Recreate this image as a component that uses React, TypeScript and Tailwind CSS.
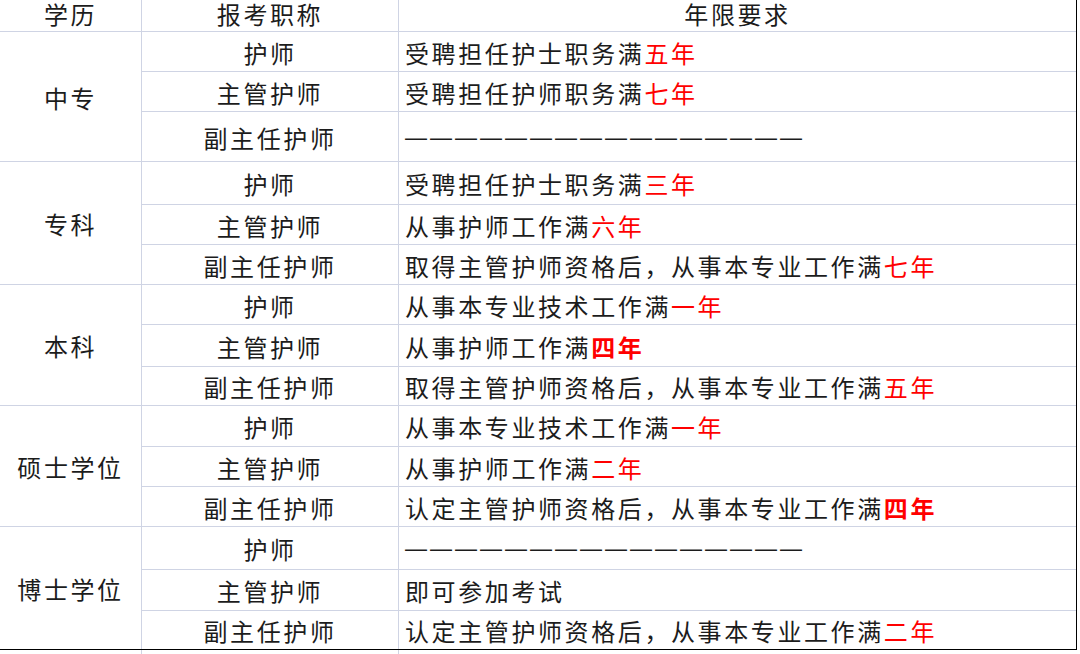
const RED = "text-[#ff0000]";

type Sub = { title: string; text: string; years?: string; bold?: boolean; dash?: boolean; h: string };
type Group = { name: string; rows: Sub[] };

const DASH = "————————————————";

const groups: Group[] = [
  {
    name: "中专",
    rows: [
      { title: "护师", text: "受聘担任护士职务满", years: "五年", h: "h-[40px]" },
      { title: "主管护师", text: "受聘担任护师职务满", years: "七年", h: "h-[40px]" },
      { title: "副主任护师", text: DASH, dash: true, h: "h-[49px]" },
    ],
  },
  {
    name: "专科",
    rows: [
      { title: "护师", text: "受聘担任护士职务满", years: "三年", h: "h-[43px]" },
      { title: "主管护师", text: "从事护师工作满", years: "六年", h: "h-[40px]" },
      { title: "副主任护师", text: "取得主管护师资格后，从事本专业工作满", years: "七年", h: "h-[39px]" },
    ],
  },
  {
    name: "本科",
    rows: [
      { title: "护师", text: "从事本专业技术工作满", years: "一年", h: "h-[40px]" },
      { title: "主管护师", text: "从事护师工作满", years: "四年", bold: true, h: "h-[42px]" },
      { title: "副主任护师", text: "取得主管护师资格后，从事本专业工作满", years: "五年", h: "h-[38px]" },
    ],
  },
  {
    name: "硕士学位",
    rows: [
      { title: "护师", text: "从事本专业技术工作满", years: "一年", h: "h-[41px]" },
      { title: "主管护师", text: "从事护师工作满", years: "二年", h: "h-[40px]" },
      { title: "副主任护师", text: "认定主管护师资格后，从事本专业工作满", years: "四年", bold: true, h: "h-[39px]" },
    ],
  },
  {
    name: "博士学位",
    rows: [
      { title: "护师", text: DASH, dash: true, h: "h-[43px]" },
      { title: "主管护师", text: "即可参加考试", h: "h-[41px]" },
      { title: "副主任护师", text: "认定主管护师资格后，从事本专业工作满", years: "二年", h: "h-[38px]" },
    ],
  },
];

export default function App() {
  return (
    <div
      className="w-[1080px] h-[654px] overflow-hidden bg-white text-[24px] leading-none tracking-[2.6px] text-[#1c1c1c]"
      style={{ fontFamily: '"Noto Sans CJK SC", sans-serif' }}
    >
      <div className="w-[1077px] border-r border-b border-black">
        {/* header */}
        <div className="flex h-[32px] border-b border-[#cfd4e4]">
          <div className="w-[142px] shrink-0 border-r border-[#cfd4e4] flex items-center justify-center pb-[3px]">
            学历
          </div>
          <div className="w-[257px] shrink-0 border-r border-[#cfd4e4] flex items-center justify-center pb-[3px]">
            报考职称
          </div>
          <div className="flex-1 flex items-center justify-center pb-[3px]">年限要求</div>
        </div>

        {groups.map((g, gi) => (
          <div
            key={g.name}
            className={`flex ${gi < groups.length - 1 ? "border-b border-[#cfd4e4]" : ""}`}
          >
            <div className="w-[142px] shrink-0 border-r border-[#cfd4e4] flex items-center justify-center pt-[2px]">
              {g.name}
            </div>
            <div className="flex-1 flex flex-col">
              {g.rows.map((r, ri) => (
                <div
                  key={r.title}
                  className={`flex ${r.h} ${ri < 2 ? "border-b border-[#cfd4e4]" : ""}`}
                >
                  <div className="w-[257px] shrink-0 border-r border-[#cfd4e4] flex items-center justify-center pt-[2px]">
                    {r.title}
                  </div>
                  <div className="flex-1 flex items-center pl-[6px] pt-[2px] whitespace-nowrap">
                    {r.dash ? (
                      <span
                        className="text-[22px] tracking-[3px]"
                        style={{ fontFamily: '"Liberation Sans", sans-serif' }}
                      >
                        {r.text}
                      </span>
                    ) : (
                      <span>{r.text}</span>
                    )}
                    {r.years && (
                      <span className={`${RED} ${r.bold ? "font-bold" : ""}`}>{r.years}</span>
                    )}
                  </div>
                </div>
              ))}
            </div>
          </div>
        ))}
      </div>

      {/* spill of the sheet grid below the table */}
      <div className="flex h-[6px]">
        <div className="w-[142px] shrink-0 border-r border-[#cfd4e4]" />
        <div className="w-[257px] shrink-0 border-r border-[#cfd4e4]" />
        <div className="flex-1" />
      </div>
    </div>
  );
}
